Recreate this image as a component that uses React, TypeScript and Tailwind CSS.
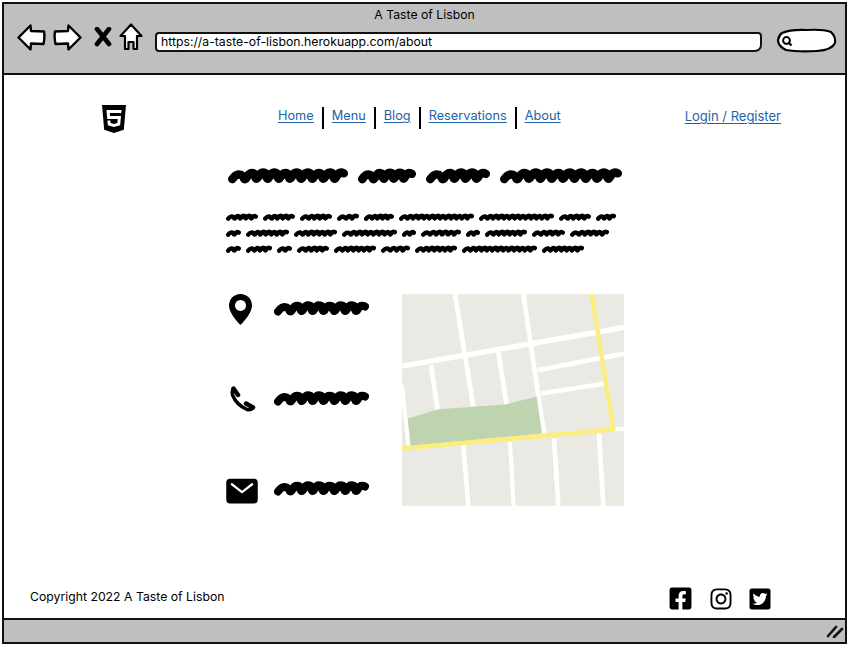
import React from "react";
import { FaHtml5, FaFacebookSquare, FaInstagram, FaTwitterSquare } from "react-icons/fa";
import { IoMail } from "react-icons/io5";

function Scribble({ w, h, s, p }: { w: number; h: number; s: number; p: number }) {
  const n = Math.max(1, Math.round((w - s) / p));
  const step = (w - s) / n;
  const top = s / 2;
  const bot = h - s / 2;
  const mid = (top + bot) / 2;
  let d = `M${s / 2} ${mid + (bot - mid) * 0.5} Q${s / 2 + step * 0.5} ${top} ${s / 2 + step} ${mid}`;
  for (let i = 1; i < n; i++) {
    const x = s / 2 + step * i;
    const t = i % 3 === 1 ? top + 0.8 : top;
    d += ` Q${x + step * 0.1} ${bot} ${x + step * 0.35} ${mid} T${x + step} ${t + (mid - t) * 0.4}`;
  }
  return (
    <svg width={w} height={h} viewBox={`0 0 ${w} ${h}`} className="block shrink-0 overflow-hidden">
      <path d={d} fill="none" stroke="#000" strokeWidth={s} strokeLinecap="round" strokeLinejoin="round" />
    </svg>
  );
}

function Line({ widths, big }: { widths: number[]; big?: boolean }) {
  return (
    <div className={big ? "flex gap-[10px]" : "flex gap-[5px]"}>
      {widths.map((w, i) =>
        big ? <Scribble key={i} w={w} h={19} s={8.5} p={11} /> : <Scribble key={i} w={w} h={9} s={4.4} p={5.5} />
      )}
    </div>
  );
}

function Arrow({ flip }: { flip?: boolean }) {
  return (
    <svg width="29" height="27" viewBox="0 0 29 27" className={flip ? "block" : "block -scale-x-100"}>
      <path d="M2 7.5 L15 7 L15.5 1.5 L27.5 13.5 L15.5 25.5 L15 19.5 L2.5 20 Q1 13 2 7.5 Z" fill="#fff" stroke="#000" strokeWidth="2.4" strokeLinejoin="round" />
    </svg>
  );
}

function MapImage() {
  const white: [number, number, number, number, number][] = [
    [180, 27, 235, 365, 14],
    [385, 27, 447, 445, 14],
    [108, 240, 128, 375, 14],
    [310, 200, 335, 360, 14],
    [21, 300, 40, 480, 12],
    [428, 255, 687, 205, 14],
    [440, 325, 630, 295, 14],
    [205, 480, 220, 662, 14],
    [345, 470, 356, 662, 12],
    [477, 460, 490, 662, 14],
    [612, 445, 625, 662, 14],
    [655, 433, 687, 431, 12],
    [21, 243, 687, 127, 16],
  ];
  return (
    <svg width="222" height="212" viewBox="21 27 666 635" className="block">
      <rect x="21" y="27" width="666" height="635" fill="#ebe9e3" />
      {white.map(([a, b, c, d, s], i) => (
        <line key={i} x1={a} y1={b} x2={c} y2={d} stroke="#fff" strokeWidth={s} />
      ))}
      <polygon points="38,400 130,372 330,358 425,334 441,445 47,482" fill="#bed4ae" />
      <polyline points="21,490 655,433 590,27" fill="none" stroke="#fbee7c" strokeWidth="13" strokeLinejoin="miter" />
    </svg>
  );
}

function Contact({ icon, gap }: { icon: React.ReactNode; gap?: boolean }) {
  return (
    <div className={`flex items-center ${gap ? "mb-[58px]" : ""}`}>
      <div className="w-[48px] h-[32px] flex items-center">{icon}</div>
      <div className="mt-[2px]">
        <Scribble w={95} h={18} s={8} p={11} />
      </div>
    </div>
  );
}

export default function App() {
  const link = "text-[#1e62a8] underline underline-offset-2";
  const sep = "w-[2px] h-[22px] bg-black mx-[8px] mt-[4px]";
  return (
    <div
      className="w-[849px] h-[646px] bg-white pl-[2px] pt-[2px] text-[12.25px] text-black overflow-hidden"
      style={{ fontFamily: "Inter, 'Open Sans', sans-serif" }}
    >
      <div className="w-[845px] h-[642px] border-2 border-[#111] flex flex-col">
        <header className="h-[71px] shrink-0 bg-[#bfbfbf] border-b-2 border-[#111] flex flex-col">
          <div className="text-center pt-[2px] h-[22px] leading-[18px]">A Taste of Lisbon</div>
          <div className="flex items-center pl-[13px] mt-[-4px] h-[30px]">
            <Arrow />
            <div className="w-[7px]" />
            <Arrow flip />
            <div className="w-[12px]" />
            <svg width="18" height="20" viewBox="0 0 18 20" className="block">
              <path d="M3 2 L15 17 M15 2 L3 17" stroke="#000" strokeWidth="4.6" strokeLinecap="round" />
            </svg>
            <div className="w-[7px]" />
            <svg width="24" height="28" viewBox="0 0 24 28" className="block">
              <path d="M12 1.5 L22.5 13 L18 13 L18 26 L14.5 26 L14.5 19 L9.5 19 L9.5 26 L6 26 L6 13 L1.5 13 Z" fill="#fff" stroke="#000" strokeWidth="2.2" strokeLinejoin="round" />
            </svg>
            <div className="w-[12px]" />
            <div className="w-[607px] h-[20px] mt-[10px] bg-white border-2 border-[#111] rounded-[4px] rounded-br-[7px] pl-[4px] leading-[15px]">
              https://a-taste-of-lisbon.herokuapp.com/about
            </div>
            <div className="w-[15px]" />
            <svg width="60" height="25" viewBox="0 0 60 25" className="block mt-[6px]">
              <path d="M5 5 Q14 1 30 2 Q46 1 54 4 Q59 9 58 15 Q55 22 40 23 Q20 24 9 22 Q1 18 1 12 Q2 7 5 5 Z" fill="#fff" stroke="#000" strokeWidth="2.2" />
              <circle cx="9.5" cy="12.5" r="3.4" fill="none" stroke="#000" strokeWidth="2" />
              <path d="M12 15 L14.5 17.5" stroke="#000" strokeWidth="2.4" />
            </svg>
          </div>
        </header>

        <main className="flex-1 flex flex-col">
          <nav className="flex items-start h-[92px] pt-[28px] text-[12.75px]">
            <div className="w-[222px] flex justify-center pr-[2px]">
              <FaHtml5 size={32} color="#000" />
            </div>
            <div className="w-[52px]" />
            <div className="flex items-center h-[22px] leading-[18px] mt-[2px]">
              <a className={link}>Home</a>
              <span className={sep} />
              <a className={link}>Menu</a>
              <span className={sep} />
              <a className={link}>Blog</a>
              <span className={sep} />
              <a className={link}>Reservations</a>
              <span className={sep} />
              <a className={link}>About</a>
            </div>
            <div className="ml-[124px] mt-[2px] leading-[18px] h-[22px] flex items-center text-[13px]">
              <a className={link}>Login / Register</a>
            </div>
          </nav>

          <section className="ml-[222px] w-[398px]">
            <div className="ml-[2px]"><Line big widths={[120, 58, 64, 122]} /></div>
            <div className="mt-[27px] flex flex-col gap-[7px]">
              <Line widths={[32, 32, 32, 22, 30, 75, 75, 32, 20]} />
              <Line widths={[15, 43, 43, 55, 14, 40, 14, 42, 33, 39]} />
              <Line widths={[15, 26, 15, 32, 42, 29, 42, 75, 42]} />
            </div>
            <div className="mt-[40px] flex justify-between">
              <div className="mt-[-2px]">
                <Contact
                  gap
                  icon={
                    <svg width="23" height="31" viewBox="0 0 23 31" className="block ml-[3px] mt-[3px]">
                      <path
                        fillRule="evenodd"
                        d="M11.5 0 C5 0 0 5 0 11.5 C0 20 11.5 31 11.5 31 S23 20 23 11.5 C23 5 18 0 11.5 0 Z M11.5 6 a5.5 5.5 0 1 0 .01 0 Z"
                        fill="#000"
                      />
                    </svg>
                  }
                />
                <Contact
                  gap
                  icon={
                    <svg width="27" height="27" viewBox="0 0 27 27" className="block ml-[3px] mt-[2px]">
                      <path d="M4 3 Q2.5 6 3.5 9 Q7.5 19 18 23.5 Q21.5 24.5 24 22" fill="none" stroke="#000" strokeWidth="3.4" />
                      <path d="M4.5 2.5 L9 9" stroke="#000" strokeWidth="4.5" strokeLinecap="round" />
                      <path d="M17 17.5 L24 21.5" stroke="#000" strokeWidth="4.5" strokeLinecap="round" />
                    </svg>
                  }
                />
                <Contact icon={<IoMail size={36} color="#000" className="mt-[5px] ml-[-2px]" />} />
              </div>
              <MapImage />
            </div>
          </section>

          <footer className="mt-auto h-[43px] flex items-start pl-[26px] pr-[73px]">
            <span className="mt-[13px] leading-[18px]">Copyright 2022 A Taste of Lisbon</span>
            <div className="ml-auto flex items-center gap-[15px] mt-[11px] text-black">
              <FaFacebookSquare size={25} />
              <FaInstagram size={24} className="ml-[1px]" />
              <FaTwitterSquare size={24} />
            </div>
          </footer>
        </main>

        <footer className="h-[24px] shrink-0 bg-[#bfbfbf] border-t-2 border-[#111] flex items-center justify-end pr-[1px]">
          <svg width="18" height="14" viewBox="0 0 18 14" className="block">
            <path d="M2 12 L10 3 M8 13 L16 5" stroke="#111" strokeWidth="2.6" strokeLinecap="round" />
          </svg>
        </footer>
      </div>
    </div>
  );
}
